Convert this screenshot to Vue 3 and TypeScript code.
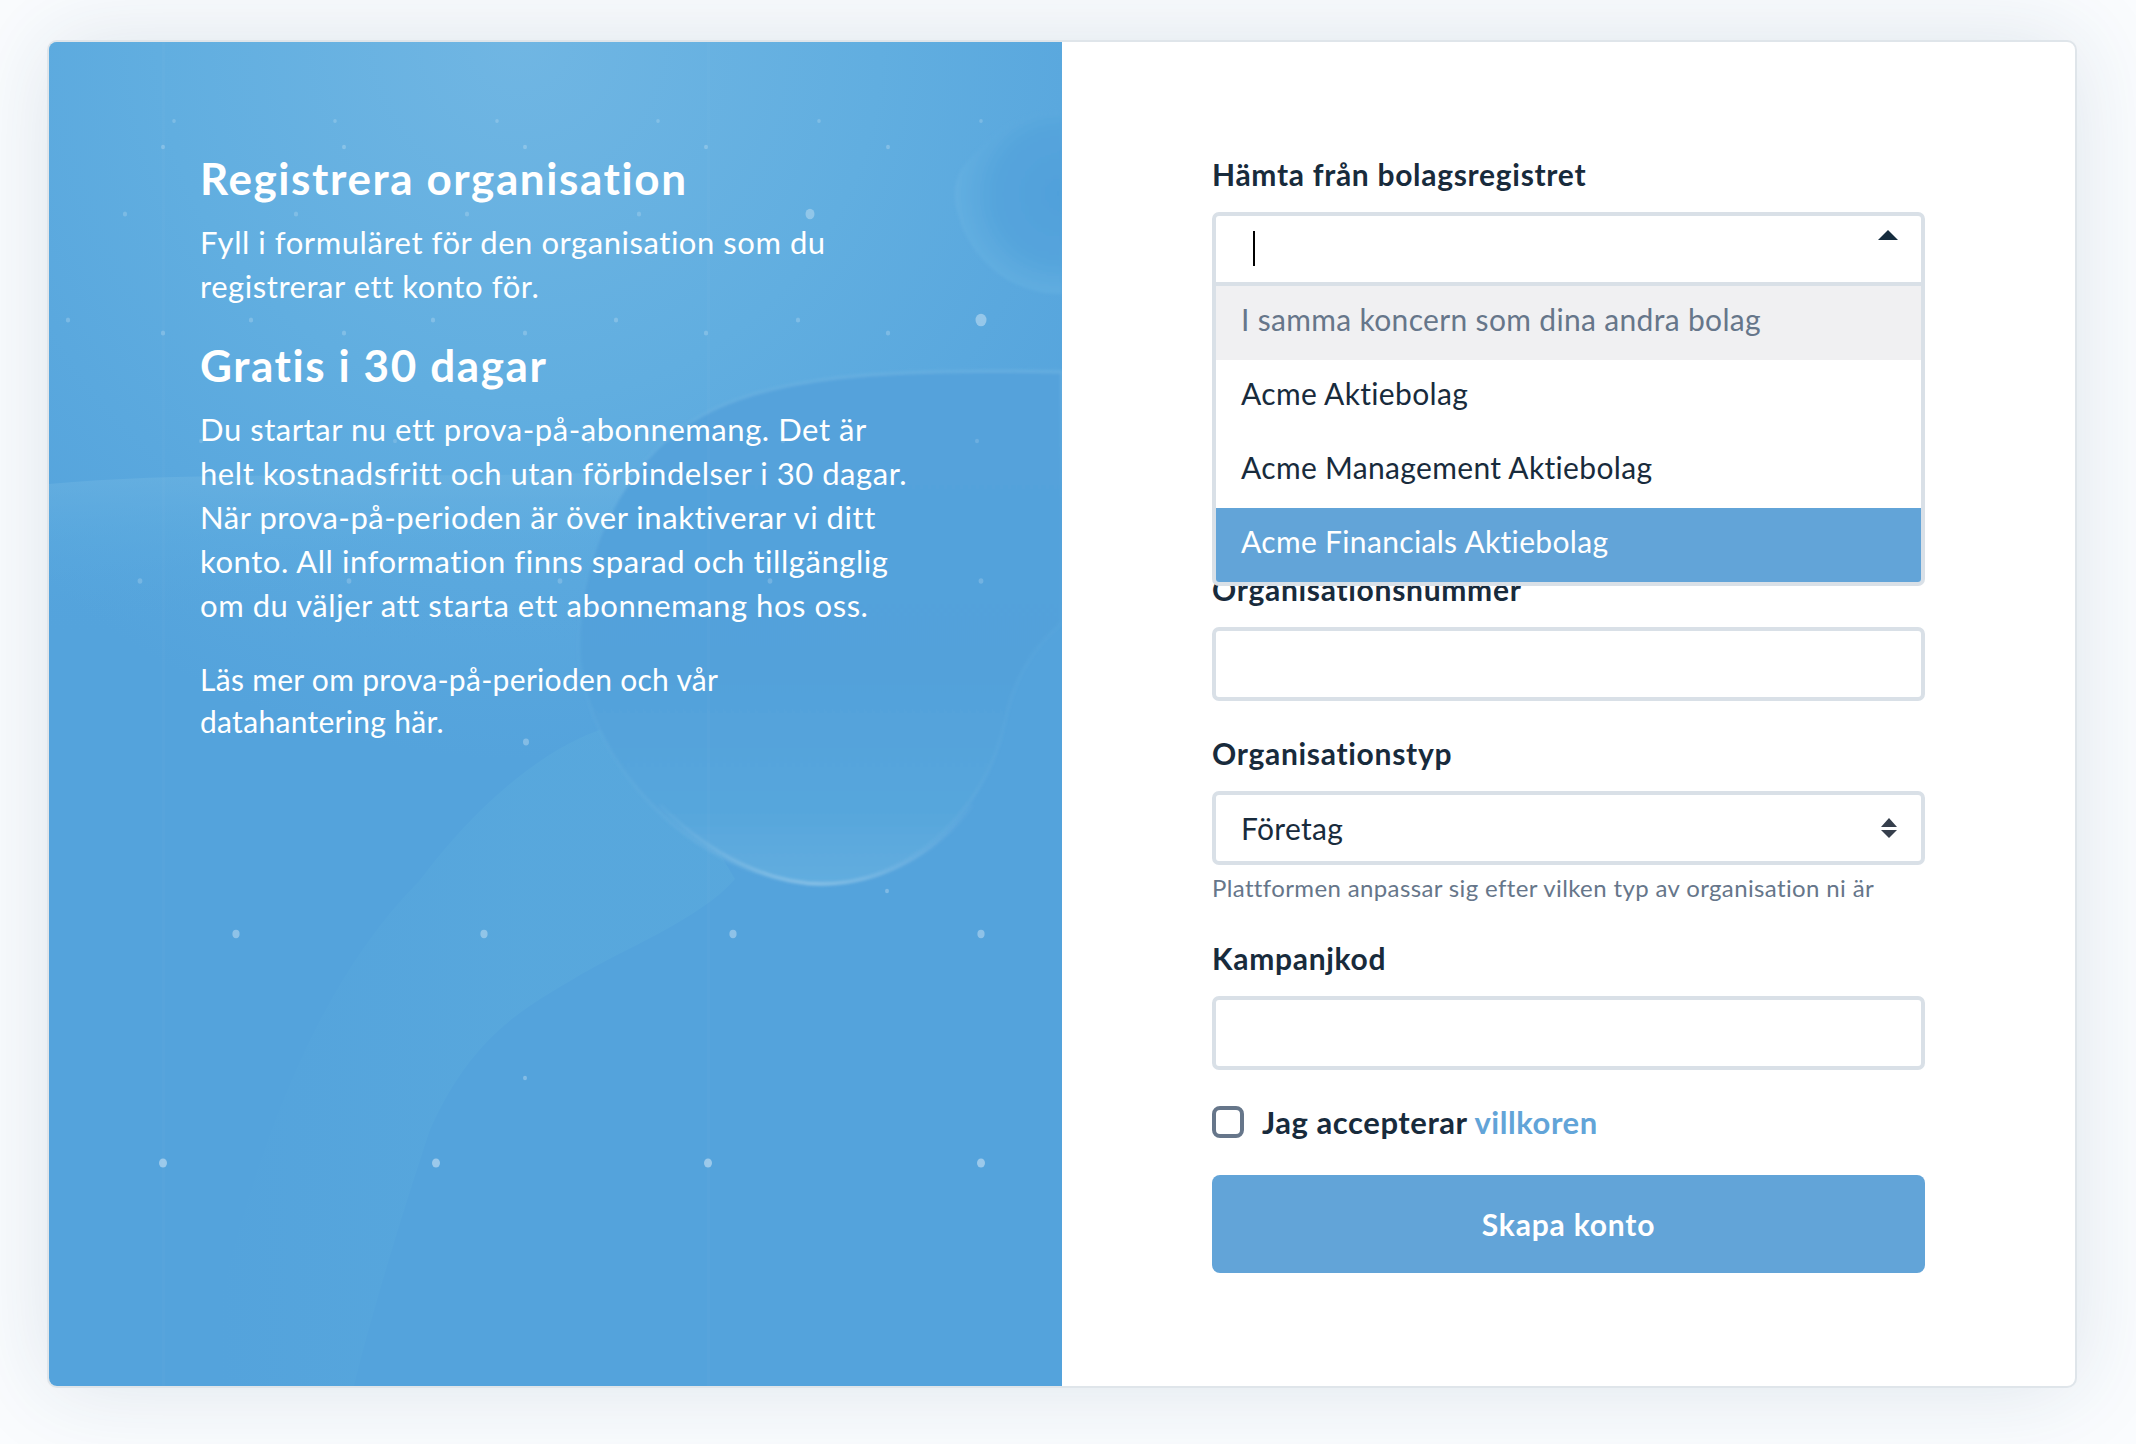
<script setup lang="ts">
interface Dot { x: number; y: number; rx: number; ry: number; o: number }
const rows: [number[], number, number, number][] = [
  [[174, 335, 497, 658, 819, 981], 121, 1.8, 0.18],
  [[163, 344, 525, 706, 888], 147, 2, 0.22],
  [[125, 296, 467, 639], 214, 2.2, 0.18],
  [[810], 214, 4.5, 0.3],
  [[68, 251, 433, 616, 798], 320, 2.2, 0.2],
  [[981], 320, 5.5, 0.36],
  [[163, 344, 525, 706, 888], 333, 2.2, 0.2],
  [[201, 395, 589, 783, 977], 441, 2, 0.14],
  [[140, 349, 560, 770, 981], 581, 2.4, 0.18],
  [[526], 742, 3, 0.28],
  [[887], 891, 2, 0.26],
  [[236, 484, 733, 981], 934, 3.6, 0.34],
  [[525], 1078, 2, 0.28],
  [[163, 436, 708, 981], 1163, 4, 0.42],
]
const dots: Dot[] = rows.flatMap(([xs, y, r, o]) => xs.map((x) => ({ x, y, rx: r, ry: r * 1.15, o })))
const options = ['Acme Aktiebolag', 'Acme Management Aktiebolag']
</script>

<template>
  <div class="page">
    <main class="card">
      <section class="intro">
        <svg class="art" viewBox="49 42 1013 1344" preserveAspectRatio="none" aria-hidden="true">
          <defs>
            <radialGradient id="glow" gradientUnits="userSpaceOnUse" cx="520" cy="40" r="720">
              <stop offset="0" stop-color="#70b6e3" />
              <stop offset="0.5" stop-color="#61aee0" />
              <stop offset="1" stop-color="#60ade0" stop-opacity="0" />
            </radialGradient>
            <radialGradient id="blobA" gradientUnits="userSpaceOnUse" cx="1062" cy="195" r="108">
              <stop offset="0" stop-color="#50a0da" />
              <stop offset="0.6" stop-color="#55a4dc" />
              <stop offset="0.92" stop-color="#60ade0" />
              <stop offset="1" stop-color="#66b0e1" />
            </radialGradient>
            <linearGradient id="bubble" gradientUnits="userSpaceOnUse" x1="800" y1="368" x2="800" y2="884">
              <stop offset="0" stop-color="#54a2db" />
              <stop offset="0.6" stop-color="#52a1da" />
              <stop offset="0.86" stop-color="#57a6dc" />
              <stop offset="1" stop-color="#62addf" />
            </linearGradient>
            <linearGradient id="edge" gradientUnits="userSpaceOnUse" x1="800" y1="368" x2="800" y2="884">
              <stop offset="0" stop-color="#74b7e3" stop-opacity="0.55" />
              <stop offset="0.3" stop-color="#74b7e3" stop-opacity="0.05" />
              <stop offset="0.75" stop-color="#74b7e3" stop-opacity="0.15" />
              <stop offset="1" stop-color="#74b7e3" stop-opacity="0.4" />
            </linearGradient>
            <linearGradient id="rim" gradientUnits="userSpaceOnUse" x1="640" y1="0" x2="990" y2="0">
              <stop offset="0" stop-color="#9ccbea" stop-opacity="0" />
              <stop offset="0.5" stop-color="#9ccbea" stop-opacity="0.7" />
              <stop offset="1" stop-color="#9ccbea" stop-opacity="0" />
            </linearGradient>
            <linearGradient id="wave" gradientUnits="userSpaceOnUse" x1="220" y1="1100" x2="520" y2="1100">
              <stop offset="0" stop-color="#5babdd" stop-opacity="0" />
              <stop offset="1" stop-color="#5babdd" />
            </linearGradient>
            <linearGradient id="band" gradientUnits="userSpaceOnUse" x1="0" y1="478" x2="0" y2="640">
              <stop offset="0" stop-color="#6db4e2" stop-opacity="0.55" />
              <stop offset="0.35" stop-color="#5fade0" stop-opacity="0.4" />
              <stop offset="1" stop-color="#54a3dc" stop-opacity="0" />
            </linearGradient>
            <filter id="soft"><feGaussianBlur stdDeviation="1.4" /></filter>
          </defs>
          <rect x="49" y="42" width="1013" height="1344" fill="#54a3dc" />
          <rect x="49" y="42" width="1013" height="780" fill="url(#glow)" />
          <path d="M49 484 C220 468 430 482 660 470 L660 680 L49 680 Z" fill="url(#band)" />
          <path d="M735 879 C700 920 620 950 572 980 C520 1010 470 1040 430 1130 C400 1220 370 1320 354 1386 L200 1386 C240 1200 300 1000 420 880 C480 800 560 730 640 720 Z" fill="url(#wave)" opacity="0.55" />
          <path d="M580 660 C575 560 625 460 695 420 C765 376 885 368 1062 372 L1062 622 C1030 650 1014 680 1005 720 C985 820 900 884 822 884 C720 884 596 790 580 660 Z" fill="url(#bubble)" stroke="url(#edge)" stroke-width="3" filter="url(#soft)" />
          <path d="M660 805 C710 855 770 884 822 884 C880 884 935 855 972 805" fill="none" stroke="url(#rim)" stroke-width="3" filter="url(#soft)" />
          <path d="M1062 111 C1030 112 1006 122 984 145 C962 165 950 180 957 210 C970 262 1012 294 1062 294 Z" fill="url(#blobA)" filter="url(#soft)" />
          <g fill="#fff" opacity="0.02">
            <rect x="162" y="42" width="3" height="1344" />
            <rect x="707" y="42" width="3" height="1344" />
          </g>
          <ellipse v-for="(d, i) in dots" :key="i" :cx="d.x" :cy="d.y" :rx="d.rx" :ry="d.ry" fill="#fff" :opacity="d.o" />
        </svg>
        <div class="copy">
          <h1>Registrera organisation</h1>
          <p>Fyll i formuläret för den organisation som du<br />registrerar ett konto för.</p>
          <h2>Gratis i 30 dagar</h2>
          <p>Du startar nu ett prova-på-abonnemang. Det är<br />helt kostnadsfritt och utan förbindelser i 30 dagar.<br />När prova-på-perioden är över inaktiverar vi ditt<br />konto. All information finns sparad och tillgänglig<br />om du väljer att starta ett abonnemang hos oss.</p>
          <p class="more">Läs mer om prova-på-perioden och vår<br />datahantering här.</p>
        </div>
      </section>

      <section class="panel">
        <form class="form" @submit.prevent>
          <div class="field lookup">
            <label class="label">Hämta från bolagsregistret</label>
            <div class="combo-slot">
              <div class="combo">
                <div class="combo-head">
                  <span class="caret"></span>
                  <svg class="tri" viewBox="0 0 20 10"><path d="M10 0 L20 10 L0 10 Z" fill="#152c3e" /></svg>
                </div>
                <div class="opt group">I samma koncern som dina andra bolag</div>
                <div v-for="o in options" :key="o" class="opt">{{ o }}</div>
                <div class="opt active">Acme Financials Aktiebolag</div>
              </div>
            </div>
          </div>

          <div class="field">
            <label class="label">Organisationsnummer</label>
            <input class="control" type="text" />
          </div>

          <div class="field">
            <label class="label">Organisationstyp</label>
            <div class="select-wrap">
              <select class="control select">
                <option>Företag</option>
              </select>
              <svg class="updown" viewBox="0 0 16 20">
                <path d="M8 0 L16 9 L0 9 Z M0 12 L16 12 L8 20 Z" fill="#363f4c" />
              </svg>
            </div>
            <p class="help">Plattformen anpassar sig efter vilken typ av organisation ni är</p>
          </div>

          <div class="field">
            <label class="label">Kampanjkod</label>
            <input class="control" type="text" />
          </div>

          <label class="terms">
            <span class="box"></span>
            <span>Jag accepterar <a class="link">villkoren</a></span>
          </label>

          <button class="submit" type="submit">Skapa konto</button>
        </form>
      </section>
    </main>
  </div>
</template>

<style>
html, body { margin: 0; background: #fafcfe; }
</style>

<style scoped>
.page {
  box-sizing: border-box;
  min-height: 1444px;
  padding: 40px 59px 56px 47px;
  background: #fafcfe;
  font-family: "Lato", "Noto Sans", sans-serif;
  color: #182b3c;
}
.card {
  display: grid;
  grid-template-columns: 1fr 1fr;
  box-sizing: border-box;
  height: 1348px;
  background: #fff;
  border: 2px solid #dfe5ea;
  border-radius: 10px;
  box-shadow: 0 0 90px rgba(30, 70, 110, 0.13);
  overflow: hidden;
}
.intro { position: relative; overflow: hidden; }
.art { position: absolute; inset: 0; width: 100%; height: 100%; display: block; }
.copy {
  position: relative;
  padding: 111px 100px 0 151px;
  color: #fff;
  font-size: 31px;
  line-height: 44px;
  letter-spacing: 0.55px;
}
.copy h1, .copy h2 { margin: 0; font-size: 44px; line-height: 50px; font-weight: 700; letter-spacing: 1.6px; }
.copy h1 { margin-bottom: 17px; }
.copy h2 { margin: 32px 0 17px; }
.copy p { margin: 0; white-space: nowrap; }
.copy .more { margin-top: 31px; font-size: 30px; line-height: 42px; letter-spacing: 0.3px; }

.panel { display: flex; justify-content: center; padding-top: 112px; }
.form { width: 713px; display: flex; flex-direction: column; }
.field { margin-bottom: 32px; }
.lookup { margin-bottom: 283px; }
.label {
  display: block;
  font-size: 30px;
  line-height: 40px;
  font-weight: 700;
  letter-spacing: 0.7px;
  margin-bottom: 18px;
  color: #182b3c;
}
.control {
  display: block;
  box-sizing: border-box;
  width: 100%;
  height: 74px;
  border: 4px solid #d9e0e7;
  border-radius: 7px;
  background: #fff;
  padding: 0 25px;
  font: inherit;
  font-size: 30px;
  letter-spacing: 0.33px;
  color: #182b3c;
  outline: none;
}
.combo-slot { position: relative; height: 74px; }
.combo {
  position: absolute;
  inset: 0 0 auto 0;
  z-index: 2;
  box-sizing: border-box;
  border: 4px solid #d9e0e7;
  border-radius: 7px;
  background: #fff;
  overflow: hidden;
}
.combo-head {
  position: relative;
  height: 70px;
  box-sizing: border-box;
  border-bottom: 4px solid #d9e0e7;
}
.caret {
  position: absolute;
  left: 37px;
  top: 15px;
  width: 2px;
  height: 35px;
  background: #000;
}
.tri { position: absolute; right: 23px; top: 14px; width: 20px; height: 10px; }
.opt {
  height: 74px;
  box-sizing: border-box;
  padding: 0 25px;
  font-size: 30px;
  line-height: 66px;
  letter-spacing: 0.33px;
  color: #182b3c;
}
.opt.group { background: #f0f0f2; color: #66768a; }
.opt.active { background: #62a4d8; color: #fff; }
.select-wrap { position: relative; }
.select { appearance: none; -webkit-appearance: none; }
.updown {
  position: absolute;
  right: 28px;
  top: 27px;
  width: 16px;
  height: 20px;
  pointer-events: none;
}
.help {
  margin: 8px 0 3px;
  height: 30px;
  font-size: 24px;
  line-height: 30px;
  letter-spacing: 0.37px;
  color: #66768a;
}
.terms {
  display: flex;
  align-items: center;
  gap: 18px;
  height: 40px;
  margin: 0 0 33px;
  font-size: 31px;
  font-weight: 700;
  letter-spacing: 0.55px;
  color: #182b3c;
}
.box {
  box-sizing: border-box;
  width: 32px;
  height: 32px;
  border: 4px solid #66768a;
  border-radius: 8px;
  background: #fff;
}
.link { color: #62a4d8; }
.submit {
  height: 98px;
  border: 0;
  border-radius: 8px;
  background: #62a4d8;
  color: #fff;
  font: inherit;
  font-size: 30px;
  font-weight: 700;
  letter-spacing: 0.8px;
}
</style>
